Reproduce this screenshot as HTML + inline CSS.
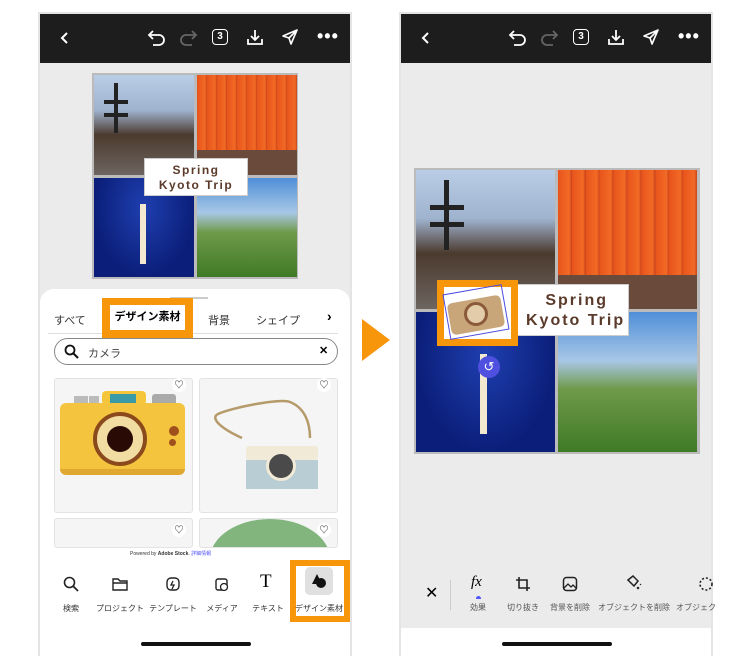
<!DOCTYPE html>
<html><head><meta charset="utf-8"><style>
*{margin:0;padding:0;box-sizing:border-box}
body{width:750px;height:667px;background:#fff;position:relative;overflow:hidden;font-family:"Liberation Sans","Noto Sans CJK JP",sans-serif}
.a{position:absolute}
.phone{position:absolute;top:12px;width:314px;height:644px;background:#ebebeb;border:2px solid #e4e4e4}
.bar{position:absolute;left:0;top:0;width:100%;height:49px;background:#1d1d1d}
.ic{position:absolute;color:#fff}
.tl{background:linear-gradient(180deg,#b9cde6 0%,#9fb3cf 35%,#4b3a2e 60%,#6d6560 100%);overflow:hidden}
.tr{background:repeating-linear-gradient(90deg,#e8541c 0,#f26a25 8%,#c9431a 10%);overflow:hidden}
.bl{background:radial-gradient(ellipse at 50% 30%,#1f3fb0,#0b1f7a 70%)}
.br{background:linear-gradient(180deg,#4f8fd8 0%,#a8c7e6 35%,#6f9a4a 55%,#3f7a25 100%)}
.lbl{position:absolute;font-size:8px;color:#333;text-align:center;width:70px;white-space:nowrap}
</style></head><body>

<!-- LEFT PHONE -->
<div class="phone" style="left:38px">
 <div class="bar">
  <svg class="ic" style="left:18px;top:17px" width="14" height="14" viewBox="0 0 14 14"><path d="M9 2L4 7l5 5" stroke="#fff" stroke-width="2" fill="none"/></svg>
  <svg class="ic" style="left:107px;top:15px" width="20" height="18" viewBox="0 0 20 18"><path d="M6 2L2 6l4 4M2 6h10a5 5 0 010 10H6" stroke="#fff" stroke-width="1.8" fill="none"/></svg>
  <svg class="ic" style="left:138px;top:15px" width="20" height="18" viewBox="0 0 20 18"><path d="M14 2l4 4-4 4M18 6H8a5 5 0 000 10h6" stroke="#666" stroke-width="1.8" fill="none"/></svg>
  <div class="ic" style="left:172px;top:15px;width:16px;height:16px;border:1.6px solid #fff;border-radius:4px;font-size:10px;text-align:center;line-height:13px;font-weight:bold">3</div>
  <svg class="ic" style="left:206px;top:14px" width="18" height="18" viewBox="0 0 18 18"><path d="M9 2v10M5 8l4 4 4-4M2 11v5h14v-5" stroke="#fff" stroke-width="1.8" fill="none"/></svg>
  <svg class="ic" style="left:241px;top:14px" width="18" height="18" viewBox="0 0 18 18"><path d="M2 8L16 2 10 16 8 10z M8 10l8-8" stroke="#fff" stroke-width="1.6" fill="none" stroke-linejoin="round"/></svg>
  <div class="ic" style="left:277px;top:12px;font-size:18px;font-weight:bold;letter-spacing:1px">•••</div>
 </div>
 <div class="a" style="left:52px;top:59px;width:206px;height:206px;background:#bbb"></div>
 <div class="a tl" style="left:54px;top:61px;width:100px;height:100px"><div class="a" style="left:20px;top:8px;width:4px;height:50px;background:#222"></div><div class="a" style="left:10px;top:25px;width:24px;height:4px;background:#222"></div><div class="a" style="left:10px;top:38px;width:24px;height:4px;background:#222"></div></div>
 <div class="a tr" style="left:157px;top:61px;width:100px;height:100px"><div class="a" style="left:0;top:75px;width:100px;height:25px;background:#6a4a3a"></div></div>
 <div class="a bl" style="left:54px;top:164px;width:100px;height:99px"></div>
 <div class="a" style="left:100px;top:190px;width:6px;height:60px;background:#f3e9d0"></div>
 <div class="a br" style="left:157px;top:164px;width:100px;height:99px"></div>
 <div class="a" style="left:104px;top:144px;width:104px;height:38px;background:#fff;border:1px solid #ccc;text-align:center;font-size:12px;color:#5a3a2a;font-weight:bold;letter-spacing:1.5px;line-height:15px;padding-top:4px">Spring<br>Kyoto Trip</div>
 <!-- panel -->
 <div class="a" style="left:0;top:275px;width:310px;height:367px;background:#fff;border-radius:14px 14px 0 0"></div>
 <div class="a" style="left:130px;top:283px;width:38px;height:2px;background:#ccc"></div>
 <div class="a" style="left:8px;top:319px;width:290px;height:1px;background:#ddd"></div>
 <div class="a" style="left:14px;top:298px;font-size:11px;color:#333">すべて</div>
 <div class="a" style="left:62px;top:284px;width:91px;height:41px;background:#f7960a"></div>
 <div class="a" style="left:70px;top:291px;width:75px;height:25px;background:#fff;font-size:11px;font-weight:bold;text-align:center;line-height:25px">デザイン素材</div>
 <div class="a" style="left:168px;top:298px;font-size:11px;color:#333">背景</div>
 <div class="a" style="left:216px;top:298px;font-size:11px;color:#333">シェイプ</div>
 <div class="a" style="left:287px;top:294px;font-size:14px;font-weight:bold">›</div>
 <div class="a" style="left:14px;top:324px;width:284px;height:27px;border:1.3px solid #888;border-radius:14px"></div>
 <svg class="a" style="left:24px;top:330px" width="15" height="15" viewBox="0 0 15 15"><circle cx="6" cy="6" r="4.5" stroke="#111" stroke-width="1.8" fill="none"/><path d="M9.5 9.5L14 14" stroke="#111" stroke-width="2"/></svg>
 <div class="a" style="left:48px;top:331px;font-size:11px;color:#444">カメラ</div>
 <div class="a" style="left:279px;top:330px;font-size:11px;font-weight:bold">✕</div>
 <!-- cards -->
 <div class="a" style="left:14px;top:364px;width:139px;height:135px;background:#f5f5f5;border:1px solid #e3e3e3;border-radius:3px"></div>
 <div class="a" style="left:159px;top:364px;width:139px;height:135px;background:#f5f5f5;border:1px solid #e3e3e3;border-radius:3px"></div>
 <div class="a" style="left:14px;top:504px;width:139px;height:30px;background:#f5f5f5;border:1px solid #e3e3e3;border-radius:3px"></div>
 <div class="a" style="left:159px;top:504px;width:139px;height:30px;background:#f5f5f5;border:1px solid #e3e3e3;border-radius:3px;overflow:hidden"><div style="position:absolute;left:10px;top:0;width:120px;height:80px;border-radius:50%;background:#82b57e"></div></div>
 <div class="a" style="left:132px;top:364px;width:14px;height:14px;background:#fff;border-radius:50%;font-size:9px;text-align:center;line-height:14px">♡</div>
 <div class="a" style="left:277px;top:364px;width:14px;height:14px;background:#fff;border-radius:50%;font-size:9px;text-align:center;line-height:14px">♡</div>
 <div class="a" style="left:132px;top:509px;width:14px;height:14px;background:#fff;border-radius:50%;font-size:9px;text-align:center;line-height:14px">♡</div>
 <div class="a" style="left:277px;top:509px;width:14px;height:14px;background:#fff;border-radius:50%;font-size:9px;text-align:center;line-height:14px">♡</div>
 <!-- yellow camera -->
 <div class="a" style="left:34px;top:382px;width:14px;height:8px;background:#bbb"></div>
 <div class="a" style="left:49px;top:382px;width:10px;height:8px;background:#bbb"></div>
 <div class="a" style="left:62px;top:377px;width:44px;height:14px;background:#f5c53a;border-radius:4px"></div>
 <div class="a" style="left:70px;top:380px;width:26px;height:10px;background:#3a9aa6"></div>
 <div class="a" style="left:112px;top:380px;width:24px;height:10px;background:#aaa;border-radius:3px 3px 0 0"></div>
 <div class="a" style="left:20px;top:389px;width:125px;height:72px;background:#f5c43e;border-radius:6px;border-bottom:6px solid #e0a830"></div>
 <div class="a" style="left:53px;top:398px;width:54px;height:54px;border-radius:50%;background:#f1dca2;border:4px solid #8a4a1c"></div>
 <div class="a" style="left:67px;top:412px;width:26px;height:26px;border-radius:50%;background:#2a0a05"></div>
 <div class="a" style="left:129px;top:412px;width:10px;height:10px;border-radius:50%;background:#a0501c"></div>
 <div class="a" style="left:129px;top:425px;width:7px;height:7px;border-radius:50%;background:#a0501c"></div>
 <!-- blue camera -->
 <svg class="a" style="left:170px;top:384px" width="110" height="70" viewBox="0 0 110 70"><path d="M32 40C10 30 0 20 8 16 20 10 70 0 80 4 95 10 100 25 100 40" stroke="#b59a6a" stroke-width="2.5" fill="none"/></svg>
 <div class="a" style="left:206px;top:432px;width:72px;height:14px;background:#f1ead6;border-radius:3px"></div>
 <div class="a" style="left:206px;top:446px;width:72px;height:29px;background:#b9cdd4"></div>
 <div class="a" style="left:226px;top:437px;width:30px;height:30px;border-radius:50%;background:#4a4a4a;border:3px solid #f1ead6"></div>
 <div class="a" style="left:90px;top:536px;font-size:5px;color:#333">Powered by <b>Adobe Stock</b>. <span style="color:#55f">詳細情報</span></div>
 <!-- bottom nav -->
 <svg class="a" style="left:23px;top:562px" width="16" height="16" viewBox="0 0 16 16"><circle cx="6.5" cy="6.5" r="5" stroke="#222" stroke-width="1.6" fill="none"/><path d="M10 10l5 5" stroke="#222" stroke-width="1.8"/></svg>
 <svg class="a" style="left:72px;top:563px" width="16" height="14" viewBox="0 0 16 14"><path d="M1 2h5l2 2h7v9H1z M1 6h14" stroke="#222" stroke-width="1.4" fill="none"/></svg>
 <svg class="a" style="left:125px;top:562px" width="16" height="16" viewBox="0 0 16 16"><rect x="2" y="2" width="12" height="12" rx="4" stroke="#222" stroke-width="1.4" fill="none"/><path d="M8 5L6 9h3l-2 4" stroke="#222" stroke-width="1.3" fill="none"/></svg>
 <svg class="a" style="left:174px;top:562px" width="16" height="16" viewBox="0 0 16 16"><rect x="2" y="3" width="11" height="11" rx="2" stroke="#222" stroke-width="1.4" fill="none"/><circle cx="10" cy="11" r="3.5" fill="#fff" stroke="#222" stroke-width="1.3"/></svg>
 <div class="a" style="left:220px;top:557px;font-size:19px;font-family:'Liberation Serif',serif">T</div>
 <div class="a" style="left:250px;top:546px;width:60px;height:62px;background:#f7960a"></div>
 <div class="a" style="left:256px;top:552px;width:48px;height:50px;background:#fff"></div>
 <div class="a" style="left:265px;top:553px;width:28px;height:28px;background:#e0e0e0;border-radius:5px"></div>
 <svg class="a" style="left:271px;top:559px" width="16" height="16" viewBox="0 0 16 16"><path d="M6 1L1 11h10z" fill="#111"/><circle cx="10" cy="10" r="5" fill="#111"/></svg>
 <div class="lbl" style="left:-4px;top:589px">検索</div>
 <div class="lbl" style="left:45px;top:589px">プロジェクト</div>
 <div class="lbl" style="left:98px;top:589px">テンプレート</div>
 <div class="lbl" style="left:147px;top:589px">メディア</div>
 <div class="lbl" style="left:193px;top:589px">テキスト</div>
 <div class="lbl" style="left:244px;top:589px">デザイン素材</div>
 <div class="a" style="left:101px;top:628px;width:110px;height:4px;background:#111;border-radius:2px"></div>
</div>

<!-- ARROW -->
<svg class="a" style="left:362px;top:319px" width="28" height="42" viewBox="0 0 28 42"><path d="M0 0L28 21 0 42z" fill="#f7960a"/></svg>

<!-- RIGHT PHONE -->
<div class="phone" style="left:399px">
 <div class="bar">
  <svg class="ic" style="left:18px;top:17px" width="14" height="14" viewBox="0 0 14 14"><path d="M9 2L4 7l5 5" stroke="#fff" stroke-width="2" fill="none"/></svg>
  <svg class="ic" style="left:107px;top:15px" width="20" height="18" viewBox="0 0 20 18"><path d="M6 2L2 6l4 4M2 6h10a5 5 0 010 10H6" stroke="#fff" stroke-width="1.8" fill="none"/></svg>
  <svg class="ic" style="left:138px;top:15px" width="20" height="18" viewBox="0 0 20 18"><path d="M14 2l4 4-4 4M18 6H8a5 5 0 000 10h6" stroke="#666" stroke-width="1.8" fill="none"/></svg>
  <div class="ic" style="left:172px;top:15px;width:16px;height:16px;border:1.6px solid #fff;border-radius:4px;font-size:10px;text-align:center;line-height:13px;font-weight:bold">3</div>
  <svg class="ic" style="left:206px;top:14px" width="18" height="18" viewBox="0 0 18 18"><path d="M9 2v10M5 8l4 4 4-4M2 11v5h14v-5" stroke="#fff" stroke-width="1.8" fill="none"/></svg>
  <svg class="ic" style="left:241px;top:14px" width="18" height="18" viewBox="0 0 18 18"><path d="M2 8L16 2 10 16 8 10z M8 10l8-8" stroke="#fff" stroke-width="1.6" fill="none" stroke-linejoin="round"/></svg>
  <div class="ic" style="left:277px;top:12px;font-size:18px;font-weight:bold;letter-spacing:1px">•••</div>
 </div>
 <div class="a" style="left:13px;top:154px;width:286px;height:286px;background:#bbb"></div>
 <div class="a tl" style="left:15px;top:156px;width:139px;height:139px"><div class="a" style="left:28px;top:10px;width:5px;height:70px;background:#222"></div><div class="a" style="left:14px;top:35px;width:34px;height:5px;background:#222"></div><div class="a" style="left:14px;top:52px;width:34px;height:5px;background:#222"></div></div>
 <div class="a tr" style="left:157px;top:156px;width:139px;height:139px"><div class="a" style="left:0;top:105px;width:139px;height:34px;background:#6a4a3a"></div></div>
 <div class="a bl" style="left:15px;top:298px;width:139px;height:140px"></div>
 <div class="a" style="left:79px;top:340px;width:7px;height:80px;background:#f3e9d0"></div>
 <div class="a br" style="left:157px;top:298px;width:139px;height:140px"></div>
 <div class="a" style="left:116px;top:270px;width:112px;height:52px;background:#fff;border:1px solid #ccc;font-size:16px;color:#5a3a2a;font-weight:bold;letter-spacing:2px;line-height:20px;padding:6px 0 0 8px">&nbsp;&nbsp;&nbsp;Spring<br>Kyoto Trip</div>
 <div class="a" style="left:36px;top:266px;width:81px;height:66px;border:7px solid #f7960a;background:#fff"></div>
 <div class="a" style="left:48px;top:285px;width:54px;height:32px;background:#c9a67a;border-radius:5px;transform:rotate(-10deg)"></div>
 <div class="a" style="left:63px;top:288px;width:24px;height:24px;border-radius:50%;background:#e3ccaa;border:3px solid #8a5a3a"></div>
 <div class="a" style="left:45px;top:275px;width:60px;height:46px;border:1.5px solid #4a4ae0;transform:rotate(-10deg)"></div>
 <div class="a" style="left:77px;top:342px;width:22px;height:22px;border-radius:50%;background:#5050e0;color:#fff;font-size:13px;text-align:center;line-height:22px">↺</div>
 <!-- toolbar -->
 <div class="a" style="left:24px;top:569px;font-size:16px">✕</div>
 <div class="a" style="left:49px;top:566px;width:1px;height:30px;background:#ccc"></div>
 <div class="a" style="left:70px;top:560px;font-size:15px;font-style:italic;font-family:'Liberation Serif',serif">fx</div>
 <div class="a" style="left:75px;top:582px;width:5px;height:3px;background:#55f;border-radius:3px 3px 0 0"></div>
 <svg class="a" style="left:114px;top:562px" width="16" height="16" viewBox="0 0 16 16"><path d="M4 1v11h11M1 4h11v11" stroke="#222" stroke-width="1.6" fill="none"/></svg>
 <svg class="a" style="left:161px;top:562px" width="16" height="16" viewBox="0 0 16 16"><rect x="1.5" y="1.5" width="13" height="13" rx="3" stroke="#222" stroke-width="1.5" fill="none"/><path d="M2 12l4-4 3 3 2-2 3 3" stroke="#222" stroke-width="1.3" fill="none"/></svg>
 <svg class="a" style="left:224px;top:561px" width="18" height="18" viewBox="0 0 18 18"><path d="M3 5l5-4 5 5-4 5z" stroke="#222" stroke-width="1.5" fill="none"/><path d="M12 12l2 2m0-2l-2 2M15 9l1 1" stroke="#222" stroke-width="1.2"/></svg>
 <svg class="a" style="left:296px;top:562px" width="16" height="16" viewBox="0 0 16 16"><circle cx="9" cy="8" r="6" stroke="#222" stroke-width="1.6" fill="none" stroke-dasharray="2 2"/></svg>
 <div class="lbl" style="left:42px;top:588px;color:#555">効果</div>
 <div class="lbl" style="left:87px;top:588px;color:#555">切り抜き</div>
 <div class="lbl" style="left:134px;top:588px;color:#555">背景を削除</div>
 <div class="lbl" style="left:197px;top:588px;color:#555">オブジェクトを削除</div>
 <div class="a" style="left:275px;top:588px;font-size:8px;color:#555;white-space:nowrap">オブジェク</div>
 <div class="a" style="left:0;top:614px;width:310px;height:28px;background:#fff"></div>
 <div class="a" style="left:101px;top:628px;width:110px;height:4px;background:#111;border-radius:2px"></div>
</div>
</body></html>
